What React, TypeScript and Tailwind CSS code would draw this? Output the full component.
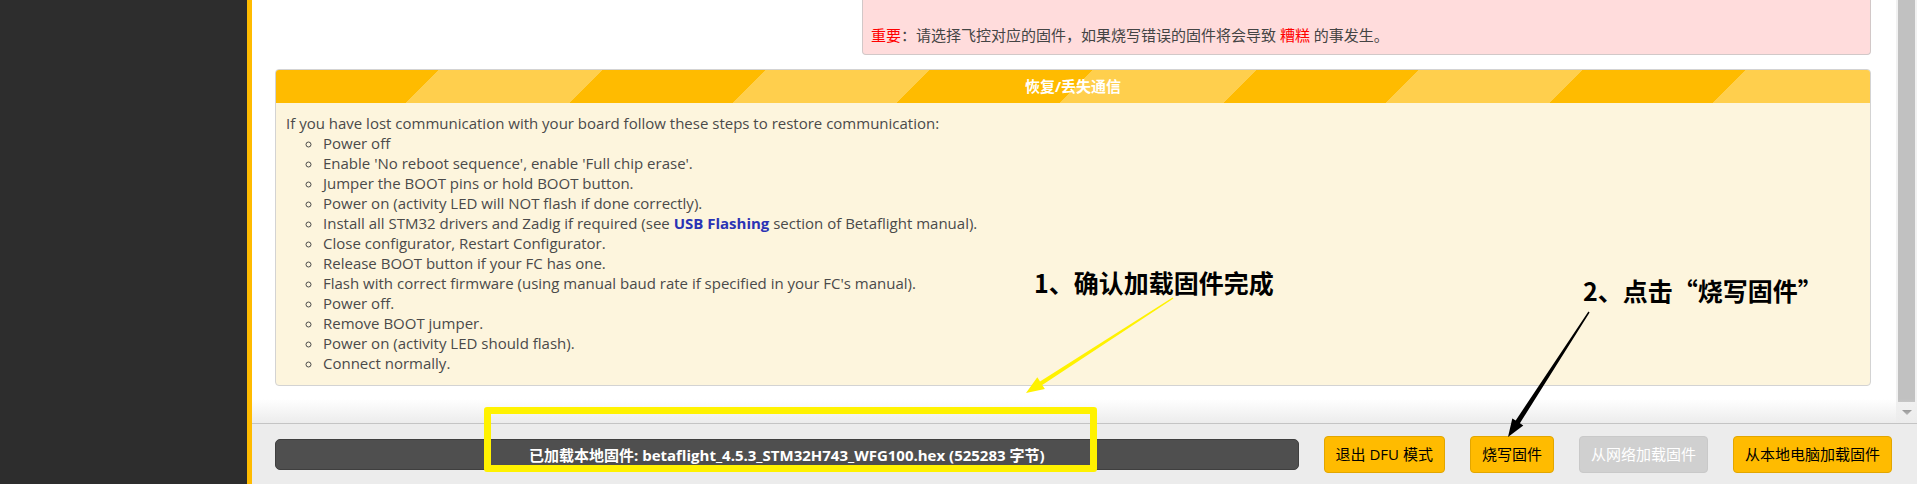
import React from 'react';

const steps = [
  'Power off',
  "Enable 'No reboot sequence', enable 'Full chip erase'.",
  'Jumper the BOOT pins or hold BOOT button.',
  'Power on (activity LED will NOT flash if done correctly).',
  'USB',
  'Close configurator, Restart Configurator.',
  'Release BOOT button if your FC has one.',
  "Flash with correct firmware (using manual baud rate if specified in your FC's manual).",
  'Power off.',
  'Remove BOOT jumper.',
  'Power on (activity LED should flash).',
  'Connect normally.',
];

function Scrollbar() {
  return (
    <div className="flex w-[21px] shrink-0 flex-col bg-[#f1f1f1]">
      <div className="mx-[2px] h-[402px] bg-[#c1c1c1]" />
      <div className="flex flex-1 items-center justify-center">
        <div className="h-0 w-0 border-x-[5px] border-t-[5px] border-x-transparent border-t-[#505050]" />
      </div>
    </div>
  );
}

function FlashButton({ label, disabled }: { label: string; disabled?: boolean }) {
  return (
    <button
      className={
        disabled
          ? 'ml-[25px] h-[37px] rounded-[4px] border border-[#c9c9c9] bg-[#d0d0d0] px-[11px] text-[15px] text-white'
          : 'ml-[25px] h-[37px] rounded-[4px] border border-[#e2a600] bg-[#ffbb00] px-[11px] text-[15px] text-black'
      }
    >
      {label}
    </button>
  );
}

export default function App() {
  return (
    <div className="relative flex h-[484px] w-[1917px] overflow-hidden font-['Open_Sans','Noto_Sans_CJK_SC',sans-serif] text-[15px] text-[#4a4a4a]">
      <div className="w-[247px] shrink-0 bg-[#2d2d2d]" />
      <div className="w-[5px] shrink-0 bg-[#ffbb00]" />

      <div className="flex min-w-0 flex-1 flex-col">
        <div className="relative flex min-h-0 flex-1">
          <div className="flex-1 overflow-hidden bg-white pl-[23px] pr-[25px]">
            {/* warning box, top is scrolled off */}
            <div className="ml-auto flex h-[55px] w-[1009px] items-end rounded-b-[4px] border-x border-b border-[#d2c8c8] bg-[#ffdcdc] pb-[9px] pl-[8px] leading-[20px] text-[#444]">
              <p>
                <span className="text-[#ff0000]">重要</span>：请选择飞控对应的固件，如果烧写错误的固件将会导致{' '}
                <span className="text-[#ff0000]">糟糕</span> 的事发生。
              </p>
            </div>

            <div className="mt-[14px] overflow-hidden rounded-[4px] border border-[#d3d3d3] bg-[#fdf5dd]">
              <div className="flex h-[33px] items-center justify-center bg-[repeating-linear-gradient(135deg,#ffbb00_0_115px,#ffcf4d_115px_231px)] text-[15px] font-bold text-white">
                恢复/丢失通信
              </div>
              <div className="pb-[12px] pl-[10px] pt-[10px] leading-[20px]">
                <p>If you have lost communication with your board follow these steps to restore communication:</p>
                <ul className="list-[circle] pl-[37px]">
                  {steps.map((s, i) =>
                    s === 'USB' ? (
                      <li key={i}>
                        Install all STM32 drivers and Zadig if required (see{' '}
                        <span className="font-bold text-[#2a33b5]">USB Flashing</span> section of Betaflight manual).
                      </li>
                    ) : (
                      <li key={i}>{s}</li>
                    )
                  )}
                </ul>
              </div>
            </div>
          </div>
          <Scrollbar />
          <div className="pointer-events-none absolute inset-x-0 bottom-0 h-[24px] bg-linear-to-b from-white/0 to-[#ececec]" />
        </div>

        <div className="flex h-[61px] shrink-0 items-center border-t border-[#c4c4c4] bg-[#ececec] pl-[23px] pr-[25px]">
          <div className="flex h-[31px] flex-1 items-center justify-center rounded-[5px] border border-[#3f3f3f] bg-[#4f4f4f] pt-[3px] text-[15px] font-bold text-white">
            已加载本地固件: betaflight_4.5.3_STM32H743_WFG100.hex (525283 字节)
          </div>
          <FlashButton label="退出 DFU 模式" />
          <FlashButton label="烧写固件" />
          <FlashButton label="从网络加载固件" disabled />
          <FlashButton label="从本地电脑加载固件" />
        </div>
      </div>

      {/* annotations drawn on top of the screenshot */}
      <div className="pointer-events-none absolute left-[484px] top-[407px] h-[65px] w-[613px] rounded-[3px] border-[7px] border-[#fff200]" />
      <div className="absolute left-[1034px] top-[270px] font-['Noto_Sans_CJK_SC',sans-serif] text-[25px] font-bold leading-none text-black">
        1、确认加载固件完成
      </div>
      <div className="absolute left-[1583px] top-[278px] font-['Noto_Sans_CJK_SC',sans-serif] text-[25px] font-bold leading-none text-black">
        2、点击“烧写固件”
      </div>
      <svg className="pointer-events-none absolute left-0 top-0" width="1917" height="484">
        <polygon
          points="1173.4,298.6 1042.2,384.9 1044.9,389.1 1026,393 1037.3,377.3 1040,381.5 1172.6,297.4"
          fill="#fff200"
        />
        <polygon
          points="1589.6,312.4 1519.9,423.3 1523.3,425.4 1508,437 1512.3,418.4 1515.7,420.5 1588.4,311.6"
          fill="#000"
        />
      </svg>
    </div>
  );
}
